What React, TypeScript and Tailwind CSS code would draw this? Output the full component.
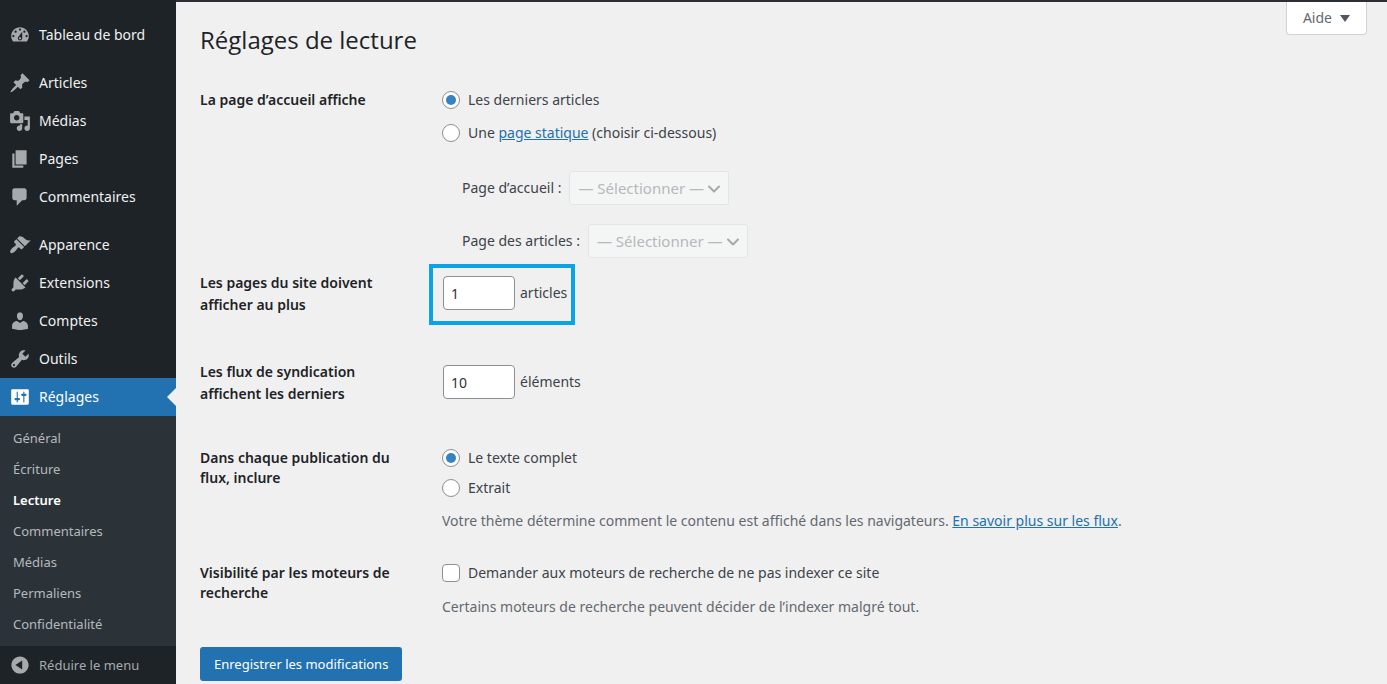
import { useState, type ReactNode } from 'react'
import { ChevronDown } from 'lucide-react'

type MenuItem = { label: string; icon: string; active?: boolean }

const ICONS = {
  dashboard:
    'M3.76 16h12.48c1.1-1.37 1.76-3.11 1.76-5 0-4.42-3.58-8-8-8s-8 3.58-8 8c0 1.89.66 3.63 1.76 5zM10 4c.55 0 1 .45 1 1s-.45 1-1 1-1-.45-1-1 .45-1 1-1zM6 6c.55 0 1 .45 1 1s-.45 1-1 1-1-.45-1-1 .45-1 1-1zm8 0c.55 0 1 .45 1 1s-.45 1-1 1-1-.45-1-1 .45-1 1-1zm-5.37 5.55L12 7v6c0 1.1-.9 2-2 2s-2-.9-2-2c0-.57.24-1.08.63-1.45zM4 10c.55 0 1 .45 1 1s-.45 1-1 1-1-.45-1-1 .45-1 1-1zm12 0c.55 0 1 .45 1 1s-.45 1-1 1-1-.45-1-1 .45-1 1-1zm-5 3c0-.55-.45-1-1-1s-1 .45-1 1 .45 1 1 1 1-.45 1-1z',
  post: 'M10.44 3.02l1.82-1.82 6.36 6.35-1.83 1.82c-1.05-.68-2.48-.57-3.41.36l-.75.75c-.92.93-1.04 2.35-.35 3.41l-1.83 1.82-2.41-2.41-2.8 2.79c-.42.42-3.38 2.71-3.8 2.29s1.86-3.39 2.28-3.81l2.79-2.79L4.1 9.36l1.83-1.82c1.05.69 2.48.57 3.4-.36l.75-.75c.93-.92 1.05-2.35.36-3.41z',
  media:
    'M13 11V4c0-.55-.45-1-1-1h-1.67L9 1H5L3.67 3H2c-.55 0-1 .45-1 1v7c0 .55.45 1 1 1h10c.55 0 1-.45 1-1zM7 4.5c1.38 0 2.5 1.12 2.5 2.5S8.38 9.5 7 9.5 4.5 8.38 4.5 7 5.62 4.5 7 4.5zM14 6h5v10.5c0 1.38-1.12 2.5-2.5 2.5S14 17.88 14 16.5s1.12-2.5 2.5-2.5c.17 0 .34.02.5.05V9h-3V6zm-4 8.05V13h2v3.5c0 1.38-1.12 2.5-2.5 2.5S7 17.88 7 16.5 8.12 14 9.5 14c.17 0 .34.02.5.05z',
  page: 'M6 15V2h10v13H6zm-1 1h8v2H3V5h2v11z',
  comments:
    'M5 2h9c1.1 0 2 .9 2 2v7c0 1.1-.9 2-2 2h-2l-5 5v-5H5c-1.1 0-2-.9-2-2V4c0-1.1.9-2 2-2z',
  appearance:
    'M14.48 11.06L7.41 3.99l1.5-1.5c.5-.56 2.3-.47 3.51.32 1.21.8 1.43 1.28 2.91 2.1 1.18.64 2.45 1.26 4.45.85zm-.71.71L6.7 4.7 4.93 6.47c-.39.39-.39 1.02 0 1.41l1.06 1.06c.39.39.39 1.03 0 1.42-.6.6-1.43 1.11-2.21 1.69-.35.26-.7.53-1.01.84C1.43 14.23.4 16.08 1.4 17.07c.99 1 2.84-.03 4.18-1.36.31-.31.58-.66.85-1.02.57-.78 1.08-1.61 1.69-2.21.39-.39 1.02-.39 1.41 0l1.06 1.06c.39.39 1.02.39 1.41 0z',
  plugins:
    'M13.11 4.36L9.87 7.6 8 5.73l3.24-3.24c.35-.34 1.05-.2 1.56.32.52.51.66 1.21.31 1.55zm-8 1.77l.91-1.12 9.01 9.01-1.19.84c-.71.71-2.63 1.16-3.82 1.16H6.14L4.9 17.26c-.59.59-1.54.59-2.12 0-.59-.58-.59-1.53 0-2.12l1.24-1.24v-3.88c0-1.13.4-3.19 1.09-3.89zm7.26 3.97l3.24-3.24c.34-.35 1.04-.21 1.55.31.52.51.66 1.21.31 1.55l-3.24 3.25z',
  users:
    'M10 9.25c-2.27 0-2.73-3.44-2.73-3.44C7 4.02 7.82 2 9.97 2c2.16 0 2.98 2.02 2.71 3.81 0 0-.41 3.44-2.68 3.44zm0 2.57L12.72 10c2.39 0 4.52 2.33 4.52 4.53v2.49s-3.65 1.13-7.24 1.13c-3.65 0-7.24-1.13-7.24-1.13v-2.49c0-2.25 1.94-4.48 4.47-4.48z',
  tools:
    'M16.68 9.77c-1.34 1.34-3.3 1.67-4.95.99l-5.41 6.52c-.99.99-2.59.99-3.58 0s-.99-2.59 0-3.57l6.52-5.42c-.68-1.65-.35-3.61.99-4.95 1.28-1.28 3.12-1.62 4.72-1.06l-2.89 2.89 2.82 2.82 2.86-2.87c.53 1.58.18 3.39-1.08 4.65zM3.81 16.21c.4.39 1.04.39 1.43 0 .4-.4.4-1.04 0-1.43-.39-.4-1.03-.4-1.43 0-.39.39-.39 1.03 0 1.43z',
  settings:
    'M18 16V4c0-.55-.45-1-1-1H3c-.55 0-1 .45-1 1v12c0 .55.45 1 1 1h14c.55 0 1-.45 1-1zM8 11h1c.55 0 1 .45 1 1s-.45 1-1 1H8v1.5c0 .28-.22.5-.5.5s-.5-.22-.5-.5V13H6c-.55 0-1-.45-1-1s.45-1 1-1h1V5.5c0-.28.22-.5.5-.5s.5.22.5.5V11zm5-2h-1c-.55 0-1-.45-1-1s.45-1 1-1h1V5.5c0-.28.22-.5.5-.5s.5.22.5.5V7h1c.55 0 1 .45 1 1s-.45 1-1 1h-1v5.5c0 .28-.22.5-.5.5s-.5-.22-.5-.5V9z',
  collapse:
    'M10 2.16c4.33 0 7.84 3.51 7.84 7.84s-3.51 7.84-7.84 7.84S2.16 14.33 2.16 10 5.67 2.16 10 2.16zM12 6L5.8 10l6.2 4z',
}

const GROUPS: MenuItem[][] = [
  [{ label: 'Tableau de bord', icon: ICONS.dashboard }],
  [
    { label: 'Articles', icon: ICONS.post },
    { label: 'Médias', icon: ICONS.media },
    { label: 'Pages', icon: ICONS.page },
    { label: 'Commentaires', icon: ICONS.comments },
  ],
  [
    { label: 'Apparence', icon: ICONS.appearance },
    { label: 'Extensions', icon: ICONS.plugins },
    { label: 'Comptes', icon: ICONS.users },
    { label: 'Outils', icon: ICONS.tools },
    { label: 'Réglages', icon: ICONS.settings, active: true },
  ],
]

const SUBMENU = [
  'Général',
  'Écriture',
  'Lecture',
  'Commentaires',
  'Médias',
  'Permaliens',
  'Confidentialité',
]

export default function App() {
  const [accueil, setAccueil] = useState('articles')
  const [flux, setFlux] = useState('complet')
  const [parPage, setParPage] = useState('1')
  const [parFlux, setParFlux] = useState('10')
  const [noIndex, setNoIndex] = useState(false)

  return (
    <div className="flex min-h-screen bg-[#f0f0f0] font-['Noto_Sans','Open_Sans',sans-serif] text-sm leading-[22px] text-[#3c434a]">
      <Sidebar />

      <main className="min-w-0 flex-1 border-t-2 border-[#2b2f34] pl-6">
        <header className="flex items-start justify-between pr-5">
          <h1 className="pt-[22px] font-['Open_Sans','Noto_Sans',sans-serif] text-2xl text-[#1d2327]">
            Réglages de lecture
          </h1>
          <button
            type="button"
            className="flex h-[33px] items-center gap-2 rounded-b border border-t-0 border-[#d0d2d4] bg-white px-4 text-[#646970]"
          >
            Aide
            <svg viewBox="0 0 10 7" className="h-[7px] w-[10px]" fill="#50575e">
              <path d="M0 0h10L5 7z" />
            </svg>
          </button>
        </header>

        <form onSubmit={(e) => e.preventDefault()}>
          <Reglage titre="La page d’accueil affiche" className="pt-[33px]">
            <div className="space-y-[11px]">
              <Radio
                name="accueil"
                checked={accueil === 'articles'}
                onChange={() => setAccueil('articles')}
              >
                Les derniers articles
              </Radio>
              <Radio
                name="accueil"
                checked={accueil === 'page'}
                onChange={() => setAccueil('page')}
              >
                Une <Lien>page statique</Lien> (choisir ci-dessous)
              </Radio>
            </div>
            <div className="mt-[27px] space-y-[19px] pl-5">
              <SelectPage
                id="page-accueil"
                label="Page d’accueil :"
                disabled={accueil !== 'page'}
              />
              <SelectPage
                id="page-articles"
                label="Page des articles :"
                disabled={accueil !== 'page'}
              />
            </div>
          </Reglage>

          <Reglage
            titre="Les pages du site doivent afficher au plus"
            htmlFor="par-page"
            className="pt-[14px]"
          >
            <div className="relative mt-1 ml-px w-fit">
              {/* cadre de mise en évidence */}
              <div className="pointer-events-none absolute -top-3 -right-2 -bottom-[15px] -left-[14px] border-4 border-[#0aa2e8]" />
              <Nombre
                id="par-page"
                value={parPage}
                onChange={setParPage}
                unite="articles"
              />
            </div>
          </Reglage>

          <Reglage
            titre="Les flux de syndication affichent les derniers"
            htmlFor="par-flux"
            className="pt-[45px]"
          >
            <div className="mt-1 ml-px">
              <Nombre
                id="par-flux"
                value={parFlux}
                onChange={setParFlux}
                unite="éléments"
              />
            </div>
          </Reglage>

          <Reglage
            titre="Dans chaque publication du flux, inclure"
            className="pt-[42px]"
            serre
          >
            <div className="space-y-2">
              <Radio
                name="flux"
                checked={flux === 'complet'}
                onChange={() => setFlux('complet')}
              >
                Le texte complet
              </Radio>
              <Radio
                name="flux"
                checked={flux === 'extrait'}
                onChange={() => setFlux('extrait')}
              >
                Extrait
              </Radio>
            </div>
            <p className="mt-[11px] text-[#646970]">
              Votre thème détermine comment le contenu est affiché dans les
              navigateurs. <Lien>En savoir plus sur les flux</Lien>.
            </p>
          </Reglage>

          <Reglage
            titre="Visibilité par les moteurs de recherche"
            className="pt-[30px]"
            serre
          >
            <label className="flex items-center gap-2">
              <input
                type="checkbox"
                checked={noIndex}
                onChange={(e) => setNoIndex(e.target.checked)}
                className="size-[18px] appearance-none rounded border border-[#8c8f94] bg-white checked:bg-[#2271b1]"
              />
              Demander aux moteurs de recherche de ne pas indexer ce site
            </label>
            <p className="mt-3 text-[#646970]">
              Certains moteurs de recherche peuvent décider de l’indexer malgré
              tout.
            </p>
          </Reglage>

          <button
            type="submit"
            className="mt-[29px] h-[34px] rounded-[3px] bg-[#2271b1] px-[14px] text-[13px] text-white"
          >
            Enregistrer les modifications
          </button>
        </form>
      </main>
    </div>
  )
}

function Sidebar() {
  return (
    <nav className="flex w-44 shrink-0 flex-col bg-[#1d2327] pt-4 text-[#f0f0f1]">
      <div className="space-y-[10px]">
        {GROUPS.map((group, i) => (
          <ul key={i}>
            {group.map((item) => (
              <li key={item.label}>
                <a
                  href="#"
                  className={
                    item.active
                      ? 'relative flex h-[38px] items-center gap-2 bg-[#2271b1] pl-[9px] text-white'
                      : 'flex h-[38px] items-center gap-2 pl-[9px]'
                  }
                >
                  <Icone d={item.icon} active={item.active} />
                  {item.label}
                  {item.active && (
                    <span className="absolute right-0 border-y-[9px] border-r-[9px] border-y-transparent border-r-[#f0f0f0]" />
                  )}
                </a>
              </li>
            ))}
          </ul>
        ))}
      </div>

      <ul className="bg-[#2c3338] pt-[6px] pb-[7px] text-[13px] text-[#b4b9be]">
        {SUBMENU.map((label) => (
          <li key={label}>
            <a
              href="#"
              className={
                label === 'Lecture'
                  ? 'flex h-[31px] items-center pl-[13px] font-semibold text-white'
                  : 'flex h-[31px] items-center pl-[13px]'
              }
            >
              {label}
            </a>
          </li>
        ))}
      </ul>

      <button
        type="button"
        className="flex h-[38px] items-center gap-2 pl-[9px] text-[13px] text-[#a7aaad]"
      >
        <Icone d={ICONS.collapse} />
        Réduire le menu
      </button>
    </nav>
  )
}

function Icone({ d, active }: { d: string; active?: boolean }) {
  return (
    <svg
      viewBox="0 0 20 20"
      className={active ? 'size-[22px] fill-white' : 'size-[22px] fill-[#a7aaad]'}
      aria-hidden="true"
    >
      <path fillRule="evenodd" d={d} />
    </svg>
  )
}

type ReglageProps = {
  titre: string
  htmlFor?: string
  className: string
  serre?: boolean
  children: ReactNode
}

function Reglage({ titre, htmlFor, className, serre, children }: ReglageProps) {
  const Titre = htmlFor ? 'label' : 'div'
  return (
    <div className={`grid grid-cols-[200px_1fr] gap-x-[42px] ${className}`}>
      <Titre
        htmlFor={htmlFor}
        className={
          serre
            ? 'pt-px leading-5 font-semibold text-[#1d2327]'
            : 'leading-[22px] font-semibold text-[#1d2327]'
        }
      >
        {titre}
      </Titre>
      <div>{children}</div>
    </div>
  )
}

type RadioProps = {
  name: string
  checked: boolean
  onChange: () => void
  children: ReactNode
}

function Radio({ name, checked, onChange, children }: RadioProps) {
  return (
    <label className="flex items-center gap-2">
      <input
        type="radio"
        name={name}
        checked={checked}
        onChange={onChange}
        className="grid size-[18px] shrink-0 appearance-none place-items-center rounded-full border border-[#8c8f94] bg-white checked:before:size-[10px] checked:before:rounded-full checked:before:bg-[#3582c4]"
      />
      <span>{children}</span>
    </label>
  )
}

function SelectPage({
  id,
  label,
  disabled,
}: {
  id: string
  label: string
  disabled: boolean
}) {
  return (
    <div className="flex items-center gap-2">
      <label htmlFor={id}>{label}</label>
      <div className="relative w-40">
        <select
          id={id}
          disabled={disabled}
          className="h-[34px] w-full appearance-none rounded-[3px] border border-[#e2e4e5] bg-[#f4f5f5] pl-2 text-[15px] text-[#b5b9bd]"
        >
          <option>— Sélectionner —</option>
        </select>
        <ChevronDown
          className="pointer-events-none absolute top-2 right-[5px] size-5 text-[#a7aaad]"
          strokeWidth={2.5}
        />
      </div>
    </div>
  )
}

function Nombre({
  id,
  value,
  onChange,
  unite,
}: {
  id: string
  value: string
  onChange: (v: string) => void
  unite: string
}) {
  return (
    <div className="flex items-center gap-[5px]">
      <input
        id={id}
        type="text"
        inputMode="numeric"
        value={value}
        onChange={(e) => onChange(e.target.value)}
        className="h-[34px] w-[72px] rounded border border-[#8c8f94] bg-white px-[7px] text-[#2c3338]"
      />
      <span>{unite}</span>
    </div>
  )
}

function Lien({ children }: { children: ReactNode }) {
  return (
    <a href="#" className="text-[#2271b1] underline">
      {children}
    </a>
  )
}
